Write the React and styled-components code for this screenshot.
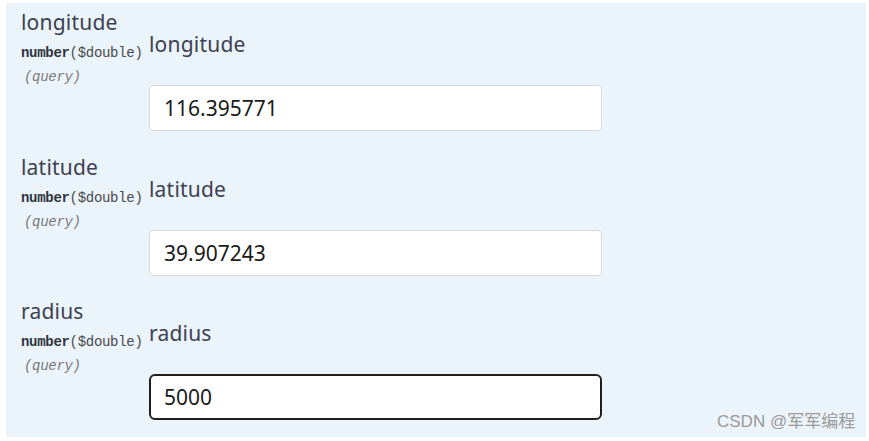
import React from "react";
import styled, { createGlobalStyle } from "styled-components";

const GlobalStyle = createGlobalStyle`
  body {
    margin: 0;
    background: #ffffff;
    font-family: "Noto Sans", "Open Sans", sans-serif;
  }
`;

const params = [
  { name: "longitude", value: "116.395771" },
  { name: "latitude", value: "39.907243" },
  { name: "radius", value: "5000", active: true },
];

export default function App() {
  return (
    <Page>
      <GlobalStyle />
      <Panel>
        {params.map((p) => (
          <Row key={p.name}>
            <NameCell>
              <Name>{p.name}</Name>
              <Type>
                number<Format>($double)</Format>
              </Type>
              <In>(query)</In>
            </NameCell>
            <FieldCell>
              <Label>{p.name}</Label>
              <Input defaultValue={p.value} active={p.active} readOnly />
            </FieldCell>
          </Row>
        ))}
      </Panel>
      <Watermark>CSDN @军军编程</Watermark>
    </Page>
  );
}

const Page = styled.div`
  position: relative;
  width: 869px;
  height: 441px;
  overflow: hidden;
`;

const Panel = styled.div`
  margin: 3px 0 0 6px;
  width: 860px;
  height: 434px;
  background: #ebf3fb;
  display: flex;
  flex-direction: column;
`;

const Row = styled.div`
  display: flex;
  height: 145px;
`;

const NameCell = styled.div`
  box-sizing: border-box;
  width: 143px;
  padding: 7px 0 0 15px;
  display: flex;
  flex-direction: column;
`;

const Name = styled.div`
  font-size: 21px;
  line-height: 24px;
  letter-spacing: 0.2px;
  color: #3b4151;
`;

const Type = styled.div`
  margin-top: 10px;
  font-family: "Liberation Mono", monospace;
  font-size: 14px;
  line-height: 18px;
  letter-spacing: -0.3px;
  font-weight: 700;
  color: #2f3440;
  white-space: nowrap;
`;

const Format = styled.span`
  font-weight: 400;
  color: #4a4a4a;
`;

const In = styled.div`
  margin-top: 6px;
  padding-left: 3px;
  font-family: "Liberation Mono", monospace;
  font-size: 14px;
  line-height: 18px;
  letter-spacing: -0.3px;
  font-style: italic;
  color: #7a7a7a;
`;

const FieldCell = styled.div`
  display: flex;
  flex-direction: column;
  padding-top: 29px;
`;

const Label = styled.div`
  font-size: 21px;
  line-height: 24px;
  letter-spacing: 0.2px;
  color: #3b4151;
`;

const Input = styled.input`
  box-sizing: border-box;
  margin-top: 29px;
  width: 453px;
  height: 46px;
  font-family: "Noto Sans", "Open Sans", sans-serif;
  font-size: 21px;
  color: #1a1a1a;
  background: #ffffff;
  outline: none;
  border: ${({ active }) => (active ? "2px solid #1f1f1f" : "1px solid #d9d9d9")};
  border-radius: ${({ active }) => (active ? "6px" : "4px")};
  padding: 0 ${({ active }) => (active ? "13px" : "14px")};
`;

const Watermark = styled.div`
  position: absolute;
  left: 717px;
  top: 411px;
  font-family: "Liberation Sans", "Noto Sans CJK SC", sans-serif;
  font-size: 17px;
  line-height: 22px;
  color: #9a9a9a;
  white-space: nowrap;
`;
